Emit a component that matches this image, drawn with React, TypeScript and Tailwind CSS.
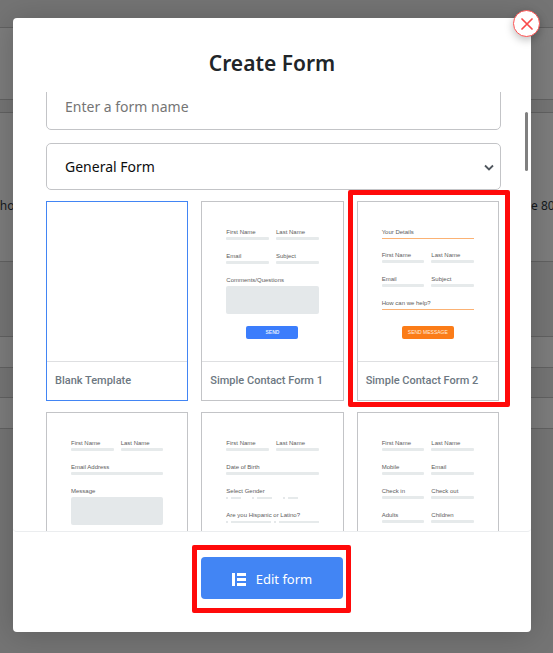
import React from 'react';

interface FieldProps {
  label: string;
  children?: React.ReactNode;
}

interface TemplateCardProps {
  title: string;
  selected?: boolean;
  highlighted?: boolean;
  children?: React.ReactNode;
}

const Bar: React.FC = () => <div className="mt-px h-[3px] rounded-[1px] bg-[#e6eaeb]" />;
const Rule: React.FC = () => <div className="mt-[2px] h-px bg-[#fbb274]" />;
const Box: React.FC = () => <div className="mt-[2px] h-7 rounded-[2px] bg-[#e4e8ea]" />;

const Field: React.FC<FieldProps> = ({ label, children }) => (
  <div className="min-w-0 flex-1">
    <div className="h-2 text-[6px] leading-[8px] whitespace-nowrap text-[#5c5c5c]">{label}</div>
    {children ?? <Bar />}
  </div>
);

const Pair: React.FC<{ left: string; right: string }> = ({ left, right }) => (
  <div className="flex gap-[7px]">
    <Field label={left} />
    <Field label={right} />
  </div>
);

const Dot: React.FC = () => <span className="size-[2px] shrink-0 rounded-full bg-[#dde1e3]" />;

const TemplateCard: React.FC<TemplateCardProps> = ({ title, selected, highlighted, children }) => (
  <div className="relative">
    <button
      type="button"
      className={`flex h-[200px] w-full flex-col border bg-white text-left ${selected ? 'border-[#4285f4]' : 'border-[#c3c4c7]'}`}
    >
      <div className="flex w-full flex-1 flex-col gap-3 px-6 pt-[26px]">{children}</div>
      <div className="h-[39px] w-full border-t border-[#dedfe1] px-2 font-['Roboto',sans-serif] text-[11px] leading-[38px] font-medium whitespace-nowrap text-[#6d7882]">
        {title}
      </div>
    </button>
    {highlighted && (
      <div className="pointer-events-none absolute -top-[11px] -right-[11px] -bottom-[6px] -left-[9px] rounded-[2px] border-[5px] border-[#ff0a0a]" />
    )}
  </div>
);

const Backdrop: React.FC = () => (
  <div className="absolute inset-0 flex flex-col bg-[#747474] pt-[27px] text-[12px] text-[#15191c]" aria-hidden="true">
    <div className="h-[73px] border-y border-[#616161] bg-[#7c7c7c]" />
    <div className="mt-3 flex h-[150px] justify-between overflow-hidden border-y border-[#616161] bg-[#7c7c7c] pt-[83px] leading-5 whitespace-nowrap">
      <span className="-ml-[6px]">sho</span>
      <span className="w-[22px]">e 80%</span>
    </div>
    <div className="mt-[74px] h-8 border-y border-[#616161] bg-[#7c7c7c]" />
    <div className="mt-[29px] h-8 border-y border-[#616161] bg-[#7c7c7c]" />
  </div>
);

const App: React.FC = () => {
  return (
    <div className="relative h-screen overflow-hidden font-['Noto_Sans','Open_Sans',sans-serif]">
      <Backdrop />
      <div className="relative h-full pt-[18px] pr-[22px] pb-[21px] pl-[13px]">
        <div role="dialog" aria-labelledby="dialog-title" className="relative flex h-full flex-col rounded-[4px] bg-white shadow-[0_2px_30px_rgba(0,0,0,0.2)]">
          <h1 id="dialog-title" className="h-[74px] shrink-0 pt-7 text-center text-[21px] leading-[34px] font-semibold text-[#212529]">
            Create Form
          </h1>

          <div className="relative min-h-0 flex-1 overflow-hidden rounded-b-[4px] border-b border-[#ebedef] pr-[30px] pl-[33px]">
            <input
              type="text"
              aria-label="Form name"
              placeholder="Enter a form name"
              className="-mt-[9px] block h-[47px] w-full rounded-[5px] border border-[#c3c4c7] px-[18px] text-[14px] text-[#212529] placeholder:text-[#757575]"
            />
            <div className="relative mt-[13px]">
              <select
                aria-label="Form type"
                className="block h-[47px] w-full appearance-none rounded-[5px] border border-[#c3c4c7] bg-white px-[18px] text-[14px] text-[#0c0d0e]"
              >
                <option>General Form</option>
              </select>
              <svg className="pointer-events-none absolute top-[21px] right-[7px] h-[8px] w-[10px]" viewBox="0 0 10 8" fill="none" stroke="#50575e" strokeWidth="1.8">
                <path d="M1 1.5l4 4 4-4" />
              </svg>
            </div>

            <div className="mt-[11px] mr-[2px] grid grid-cols-3 gap-x-[13px] gap-y-[11px] font-['Liberation_Sans',sans-serif]">
              <TemplateCard title="Blank Template" selected />
              <TemplateCard title="Simple Contact Form 1">
                <Pair left="First Name" right="Last Name" />
                <Pair left="Email" right="Subject" />
                <div>
                  <Field label="Comments/Questions"><Box /></Field>
                </div>
                <div className="mx-auto h-[13px] w-[52px] rounded-[2px] bg-[#3b7dfc] text-center text-[5px] leading-[13px] font-bold text-[#dce8ff]">SEND</div>
              </TemplateCard>
              <TemplateCard title="Simple Contact Form 2" highlighted>
                <div>
                  <Field label="Your Details"><Rule /></Field>
                </div>
                <Pair left="First Name" right="Last Name" />
                <Pair left="Email" right="Subject" />
                <div>
                  <Field label="How can we help?"><Rule /></Field>
                </div>
                <div className="mx-auto mt-1 h-[13px] w-[52px] rounded-[2px] bg-[#fb7c18] text-center text-[5px] leading-[13px] font-medium whitespace-nowrap text-[#ffeedd]">SEND MESSAGE</div>
              </TemplateCard>

              <TemplateCard title="Simple Contact Form 3">
                <Pair left="First Name" right="Last Name" />
                <div>
                  <Field label="Email Address" />
                </div>
                <div>
                  <Field label="Message"><Box /></Field>
                </div>
              </TemplateCard>
              <TemplateCard title="Patient Form">
                <Pair left="First Name" right="Last Name" />
                <div>
                  <Field label="Date of Birth" />
                </div>
                <div>
                  <Field label="Select Gender">
                    <div className="mt-px flex h-[3px] items-center gap-[3px]">
                      <Dot />
                      <span className="mr-2 h-[2px] w-[10px] bg-[#e6eaeb]" />
                      <Dot />
                      <span className="mr-2 h-[2px] w-[15px] bg-[#e6eaeb]" />
                      <Dot />
                      <span className="h-[2px] w-[10px] bg-[#e6eaeb]" />
                    </div>
                  </Field>
                </div>
                <div>
                  <Field label="Are you Hispanic or Latino?">
                    <div className="mt-px flex h-[3px] items-center gap-[3px]">
                      <Dot />
                      <span className="h-[2px] flex-1 bg-[#e6eaeb]" />
                      <Dot />
                      <span className="h-[2px] flex-1 bg-[#e6eaeb]" />
                    </div>
                  </Field>
                </div>
              </TemplateCard>
              <TemplateCard title="Booking Form">
                <Pair left="First Name" right="Last Name" />
                <Pair left="Mobile" right="Email" />
                <Pair left="Check in" right="Check out" />
                <Pair left="Adults" right="Children" />
              </TemplateCard>
            </div>

            <div className="absolute top-5 right-[3px] h-[59px] w-[3px] rounded-full bg-[#808080]" />
          </div>

          <div className="flex h-[100px] shrink-0 justify-center pt-[25px]">
            <div className="relative h-[42px]">
              <button type="button" className="flex h-[42px] w-[142px] items-center justify-center gap-[10px] rounded-[4px] bg-[#4285f4] pt-[3px] text-[13px] text-white">
                <svg className="h-[13px] w-[14px]" viewBox="0 0 14 13" fill="currentColor">
                  <path d="M0 0h3v13H0zM5 0h9v3H5zM5 5h9v3H5zM5 10h9v3H5z" />
                </svg>
                Edit form
              </button>
              <div className="pointer-events-none absolute -top-[12px] -right-[8px] -bottom-[14px] -left-[9px] rounded-[2px] border-[5px] border-[#ff0a0a]" />
            </div>
          </div>

          <button
            type="button"
            aria-label="Close"
            className="absolute -top-[8px] -right-[9px] flex size-[27px] items-center justify-center rounded-full border border-[#ff5252] bg-white shadow-[0_3px_8px_rgba(0,0,0,0.25)]"
          >
            <svg className="size-3" viewBox="0 0 12 12" fill="none" stroke="#f94a4a" strokeWidth="1.7" strokeLinecap="round">
              <path d="M1 1l10 10M11 1L1 11" />
            </svg>
          </button>
        </div>
      </div>
    </div>
  );
};

export default App;
